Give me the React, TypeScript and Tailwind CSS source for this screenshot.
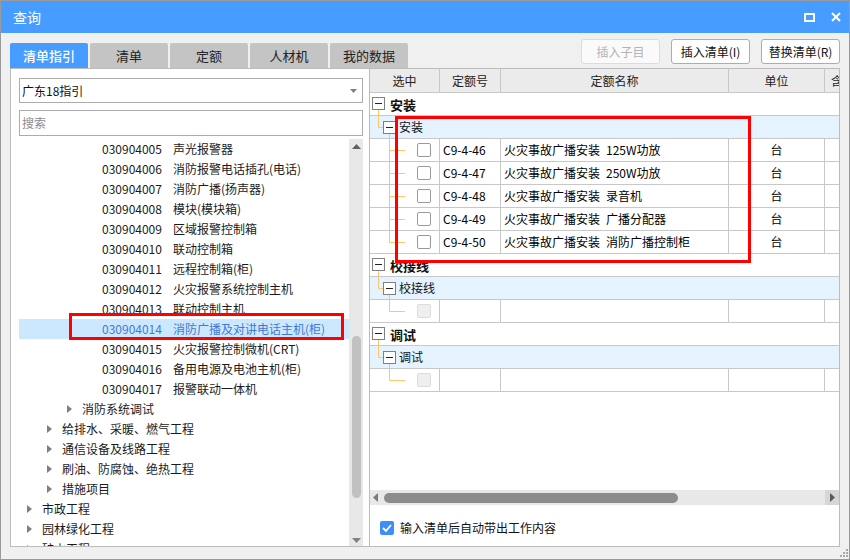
import React from 'react'

type TreeNode = {
  level: 0 | 1 | 2 | 3
  text: string
  code?: string
  arrow?: boolean
  selected?: boolean
}

const TREE: TreeNode[] = [
  { level: 3, code: '030904005', text: '声光报警器' },
  { level: 3, code: '030904006', text: '消防报警电话插孔(电话)' },
  { level: 3, code: '030904007', text: '消防广播(扬声器)' },
  { level: 3, code: '030904008', text: '模块(模块箱)' },
  { level: 3, code: '030904009', text: '区域报警控制箱' },
  { level: 3, code: '030904010', text: '联动控制箱' },
  { level: 3, code: '030904011', text: '远程控制箱(柜)' },
  { level: 3, code: '030904012', text: '火灾报警系统控制主机' },
  { level: 3, code: '030904013', text: '联动控制主机' },
  { level: 3, code: '030904014', text: '消防广播及对讲电话主机(柜)', selected: true },
  { level: 3, code: '030904015', text: '火灾报警控制微机(CRT)' },
  { level: 3, code: '030904016', text: '备用电源及电池主机(柜)' },
  { level: 3, code: '030904017', text: '报警联动一体机' },
  { level: 2, text: '消防系统调试', arrow: true },
  { level: 1, text: '给排水、采暖、燃气工程', arrow: true },
  { level: 1, text: '通信设备及线路工程', arrow: true },
  { level: 1, text: '刷油、防腐蚀、绝热工程', arrow: true },
  { level: 1, text: '措施项目', arrow: true },
  { level: 0, text: '市政工程', arrow: true },
  { level: 0, text: '园林绿化工程', arrow: true },
  { level: 0, text: '矿山工程', arrow: true },
]

const INDENT = ['pl-[8px]', 'pl-[28px]', 'pl-[48px]', 'pl-[68px]']

// name parts: [prefix, suffix] shown with a half-width gap between them
const GROUPS: { name: string; rows: [string, string, string][] }[] = [
  {
    name: '安装',
    rows: [
      ['C9-4-46', '火灾事故广播安装', '125W功放'],
      ['C9-4-47', '火灾事故广播安装', '250W功放'],
      ['C9-4-48', '火灾事故广播安装', '录音机'],
      ['C9-4-49', '火灾事故广播安装', '广播分配器'],
      ['C9-4-50', '火灾事故广播安装', '消防广播控制柜'],
    ],
  },
  { name: '校接线', rows: [] },
  { name: '调试', rows: [] },
]

const TABS = ['清单指引', '清单', '定额', '人材机', '我的数据']

const LINE = '#ffc56a'

function Arrow() {
  return (
    <svg width="5" height="8" viewBox="0 0 5 8">
      <path d="M0 0 L5 4 L0 8 Z" fill="#7f7f7f" />
    </svg>
  )
}

function MinusBox({ x, y }: { x: number; y: number }) {
  return (
    <>
      <rect x={x + 0.5} y={y + 0.5} width="12" height="12" fill="#fff" stroke="#808080" />
      <line x1={x + 3} y1={y + 6.5} x2={x + 10} y2={y + 6.5} stroke="#222" />
    </>
  )
}

function TreeRow({ node }: { node: TreeNode }) {
  return (
    <div
      className={`h-[20px] flex items-center whitespace-nowrap text-[12px] leading-none ${INDENT[node.level]} ${
        node.selected ? 'bg-[#cce8ff] text-[#4079d6]' : 'text-[#1a1a1a]'
      }`}
    >
      <span className="w-[15px] shrink-0 flex items-center">{node.arrow && <Arrow />}</span>
      {node.code && <span className="w-[71px] shrink-0">{node.code}</span>}
      <span>{node.text}</span>
    </div>
  )
}

function GroupRow({ name }: { name: string }) {
  return (
    <div className="h-[23px] border-b border-[#c8c8c8] bg-white flex items-center">
      <svg width="20" height="22" className="shrink-0">
        <line x1="8.5" y1="17" x2="8.5" y2="23" stroke={LINE} />
        <MinusBox x={2} y={4} />
      </svg>
      <span className="text-[13px] font-bold text-[#111] leading-none">{name}</span>
    </div>
  )
}

function SubRow({ name }: { name: string }) {
  return (
    <div className="h-[23px] border-b border-[#c8c8c8] bg-[#e5f3ff] flex items-center">
      <svg width="29" height="22" className="shrink-0">
        <path d="M8.5 -1 V11.5 H13" stroke={LINE} fill="none" />
        <line x1="19.5" y1="18" x2="19.5" y2="23" stroke={LINE} />
        <MinusBox x={13} y={5} />
      </svg>
      <span className="text-[12px] text-[#111] leading-none">{name}</span>
    </div>
  )
}

function DataRow({
  code,
  name,
  detail,
  last,
  empty,
}: {
  code?: string
  name?: string
  detail?: string
  last: boolean
  empty?: boolean
}) {
  return (
    <div className="h-[23px] border-b border-[#c8c8c8] bg-white flex text-[12px] leading-none text-black">
      <div className="w-[70px] shrink-0 border-r border-[#c8c8c8] flex items-center">
        <svg width="36" height="22" className="shrink-0">
          <path d={last ? 'M19.5 -1 V11.5 H35' : 'M19.5 -1 V23 M19.5 11.5 H35'} stroke={LINE} fill="none" />
        </svg>
        <span
          className={`ml-[11px] w-[14px] h-[14px] rounded-[2px] border ${
            empty ? 'bg-[#efefef] border-[#dcdcdc]' : 'bg-white border-[#9a9a9a]'
          }`}
        />
      </div>
      <div className="w-[61px] shrink-0 border-r border-[#c8c8c8] flex items-center pl-[3px] whitespace-nowrap">{code}</div>
      <div className="w-[228px] shrink-0 border-r border-[#c8c8c8] flex items-center pl-[3px] whitespace-nowrap">
        {name && <span>{name}</span>}
        {detail && <span className="ml-[6px]">{detail}</span>}
      </div>
      <div className="w-[96px] shrink-0 border-r border-[#c8c8c8] flex items-center justify-center">{code ? '台' : ''}</div>
      <div className="flex-1" />
    </div>
  )
}

export default function App() {
  return (
    <div className="relative w-[850px] h-[560px] border border-[#9a9a9a] bg-[#f0f0f0] flex flex-col overflow-hidden font-['Noto_Sans_CJK_SC',sans-serif]">
      {/* title bar */}
      <div className="h-[32px] shrink-0 bg-[#469cff] flex items-center pl-[12px] pr-[8px]">
        <span className="text-white text-[14px] leading-none">查询</span>
        <div className="ml-auto flex items-center gap-[16px]">
          <svg width="11" height="9" viewBox="0 0 11 9">
            <rect x="1" y="1" width="9" height="7" fill="none" stroke="#fff" strokeWidth="2" />
          </svg>
          <svg width="10" height="10" viewBox="0 0 10 10">
            <path d="M1 1 L9 9 M9 1 L1 9" stroke="#fff" strokeWidth="2" />
          </svg>
        </div>
      </div>

      {/* tabs + buttons */}
      <div className="h-[35px] shrink-0 flex items-end px-[9px]">
        <div className="flex gap-[2px]">
          {TABS.map((t, i) => (
            <div
              key={t}
              className={`w-[78px] h-[25px] rounded-t-[2px] flex items-center justify-center text-[13px] leading-none ${
                i === 0 ? 'bg-[#469cff] text-white font-medium' : 'bg-[#c4c4c4] text-[#222]'
              }`}
            >
              {t}
            </div>
          ))}
        </div>
        <div className="ml-auto mb-[4px] flex gap-[11px]">
          <button className="w-[79px] h-[25px] rounded-[3px] border border-[#dcdcdc] bg-[#fafafa] text-[12px] text-[#b4b4b4] leading-none">
            插入子目
          </button>
          <button className="w-[79px] h-[25px] rounded-[3px] border border-[#adadad] bg-white text-[12px] text-[#111] leading-none">
            插入清单(I)
          </button>
          <button className="w-[79px] h-[25px] rounded-[3px] border border-[#adadad] bg-white text-[12px] text-[#111] leading-none">
            替换清单(R)
          </button>
        </div>
      </div>

      {/* main */}
      <div className="h-[479px] shrink-0 flex px-[9px]">
        {/* left panel */}
        <div className="w-[359px] shrink-0 bg-white border-l border-t border-b border-[#bcbcbc] pl-[8px] pr-[6px] pt-[9px] flex flex-col">
          <div className="h-[25px] shrink-0 border border-[#ababab] flex items-center pl-[2px] pr-[5px] text-[12px] text-[#111] leading-none">
            广东18指引
            <svg width="7" height="4" viewBox="0 0 7 4" className="ml-auto">
              <path d="M0 0 H7 L3.5 4 Z" fill="#808080" />
            </svg>
          </div>
          <div className="h-[26px] mt-[7px] shrink-0 border border-[#ababab] flex items-center pl-[2px] text-[12px] text-[#8c8c8c] leading-none">
            搜索
          </div>
          <div className="mt-[3px] flex-1 min-h-0 flex">
            <div className="flex-1 overflow-hidden">
              {TREE.map((n) => (
                <TreeRow key={n.text} node={n} />
              ))}
            </div>
            <div className="w-[14px] shrink-0 bg-[#e8e8e8] flex flex-col items-center">
              <svg width="9" height="5" viewBox="0 0 9 5" className="mt-[5px]">
                <path d="M0 5 L4.5 0 L9 5 Z" fill="#606060" />
              </svg>
              <div className="mt-[187px] w-[9px] h-[162px] rounded-[5px] bg-[#c1c1c1]" />
              <svg width="9" height="5" viewBox="0 0 9 5" className="mt-auto mb-[3px]">
                <path d="M0 0 L9 0 L4.5 5 Z" fill="#808080" />
              </svg>
            </div>
          </div>
        </div>

        {/* right panel */}
        <div className="w-[471px] shrink-0 bg-white border border-[#bcbcbc] flex flex-col overflow-hidden">
          <div className="h-[24px] shrink-0 bg-[#ebebeb] border-b border-[#c8c8c8] flex text-[12px] text-[#222] leading-none">
            <div className="w-[70px] shrink-0 border-r border-[#c8c8c8] flex items-center justify-center">选中</div>
            <div className="w-[61px] shrink-0 border-r border-[#c8c8c8] flex items-center justify-center">定额号</div>
            <div className="w-[228px] shrink-0 border-r border-[#c8c8c8] flex items-center justify-center">定额名称</div>
            <div className="w-[96px] shrink-0 border-r border-[#c8c8c8] flex items-center justify-center">单位</div>
            <div className="flex-1 flex items-center pl-[6px] whitespace-nowrap">含量</div>
          </div>
          {GROUPS.map((g) => (
            <React.Fragment key={g.name}>
              <GroupRow name={g.name} />
              <SubRow name={g.name} />
              {g.rows.length ? (
                g.rows.map(([c, n, d], i) => (
                  <DataRow key={c} code={c} name={n} detail={d} last={i === g.rows.length - 1} />
                ))
              ) : (
                <DataRow last empty />
              )}
            </React.Fragment>
          ))}
          <div className="flex-1" />
          {/* horizontal scrollbar */}
          <div className="h-[15px] shrink-0 bg-[#e8e8e8] flex items-center">
            <svg width="5" height="9" viewBox="0 0 5 9" className="ml-[3px]">
              <path d="M5 0 L0 4.5 L5 9 Z" fill="#7a7a7a" />
            </svg>
            <div className="ml-[6px] w-[294px] h-[10px] rounded-full bg-[#8c8c8c]" />
            <div className="ml-auto w-[14px] h-full bg-[#d6d6d6] flex items-center justify-center">
              <svg width="5" height="9" viewBox="0 0 5 9">
                <path d="M0 0 L5 4.5 L0 9 Z" fill="#5a5a5a" />
              </svg>
            </div>
          </div>
          {/* footer */}
          <div className="h-[41px] shrink-0 flex items-center pl-[10px] pt-[5px] gap-[6px]">
            <span className="w-[14px] h-[14px] rounded-[2px] bg-[#3d8ff5] flex items-center justify-center">
              <svg width="10" height="8" viewBox="0 0 10 8">
                <path d="M1 4 L4 7 L9 1" stroke="#fff" strokeWidth="1.8" fill="none" />
              </svg>
            </span>
            <span className="text-[12px] text-[#111] leading-none">输入清单后自动带出工作内容</span>
          </div>
        </div>
      </div>

      {/* bottom strip with resize grip */}
      <div className="flex-1 flex justify-end items-end pr-[1px] pb-[2px]">
        <svg width="9" height="9" viewBox="0 0 9 9">
          <rect x="7" y="1" width="2" height="2" fill="#a8a8a8" />
          <rect x="4" y="4" width="2" height="2" fill="#a8a8a8" />
          <rect x="7" y="4" width="2" height="2" fill="#a8a8a8" />
          <rect x="1" y="7" width="2" height="2" fill="#a8a8a8" />
          <rect x="4" y="7" width="2" height="2" fill="#a8a8a8" />
          <rect x="7" y="7" width="2" height="2" fill="#a8a8a8" />
        </svg>
      </div>

      {/* red annotation boxes */}
      <div className="absolute left-[68px] top-[312px] w-[275px] h-[27px] border-[3px] border-[#ff0000]" />
      <div className="absolute left-[394px] top-[115px] w-[356px] h-[147px] border-[3px] border-[#ff0000]" />
    </div>
  )
}
